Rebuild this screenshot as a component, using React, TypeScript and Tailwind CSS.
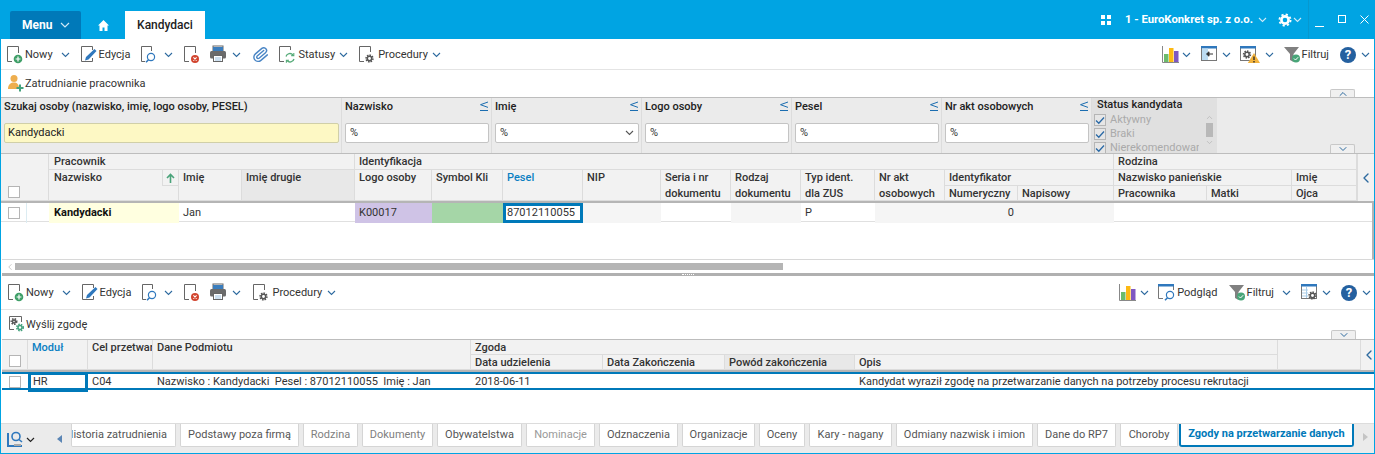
import React from "react";
import { Paperclip, ChevronLeft, ChevronUp, ChevronDown } from "lucide-react";

const Chev = ({ className = "", color = "#2d6a9f" }: { className?: string; color?: string }) => (
  <svg width="9" height="6" viewBox="0 0 9 6" className={`shrink-0 ${className}`}>
    <path d="M1 1l3.5 3.5L8 1" fill="none" stroke={color} strokeWidth="1.1" />
  </svg>
);

const Gear = ({ x, y, r = 2.2, color = "#555" }: { x: number; y: number; r?: number; color?: string }) => (
  <g>
    <circle cx={x} cy={y} r={r + 1.2} fill="none" stroke={color} strokeWidth="1.6" strokeDasharray="1.5 1.1" />
    <circle cx={x} cy={y} r={r} fill="none" stroke={color} strokeWidth="1.5" />
  </g>
);

const DocBase = () => <path d="M12.5 8V1.5H1.5v15H6" fill="none" stroke="#666" strokeWidth="1" />;

// dx moves the drawing left inside its box, doc icons sit 1px further out
const Icon = ({ children, w = 18, h = 19, dx = 0 }: { children: React.ReactNode; w?: number; h?: number; dx?: number }) => (
  <svg width={w} height={h} viewBox={`${dx} 0 ${w} ${h}`} className="shrink-0">
    {children}
  </svg>
);

const NewIcon = () => (
  <Icon dx={1}>
    <DocBase />
    <circle cx="12" cy="14" r="4.3" fill="#3f9f68" />
    <path d="M12 11.6v4.8M9.6 14h4.8" stroke="#fff" strokeWidth="1.2" />
  </Icon>
);
const EditIcon = () => (
  <Icon dx={1}>
    <path d="M12.5 5V1.5H1.5v15h11V13" fill="none" stroke="#666" />
    <path d="M5 15.5l1-3.5L14.5 4l2 2L8.5 14.5z" fill="#2f78bd" />
  </Icon>
);
const SearchIcon = () => (
  <Icon dx={1}>
    <path d="M11.5 6V1.5H1.5v15H5" fill="none" stroke="#666" />
    <circle cx="11" cy="12" r="3.6" fill="none" stroke="#2f78bd" strokeWidth="1.2" />
    <path d="M8.5 14.7L6 17.2" stroke="#2f78bd" strokeWidth="1.6" />
  </Icon>
);
const DeleteIcon = () => (
  <Icon dx={1}>
    <DocBase />
    <circle cx="12" cy="14" r="4" fill="#d2452f" />
    <path d="M10.4 12.4l3.2 3.2M13.6 12.4l-3.2 3.2" stroke="#fff" strokeWidth="1.1" />
  </Icon>
);
const PrintIcon = () => (
  <Icon>
    <rect x="4" y="1" width="10" height="5" fill="#fff" stroke="#666" />
    <rect x="4" y="2" width="10" height="4" fill="#3a7dbd" />
    <rect x="1" y="6" width="16" height="7.5" rx="1.5" fill="#6b6b6b" />
    <rect x="4.5" y="10.5" width="9" height="6" fill="#fff" stroke="#666" />
    <path d="M6 13h6M6 15h6" stroke="#9cc2e2" />
  </Icon>
);
const RefreshIcon = () => (
  <Icon dx={1}>
    <path d="M12.5 5V1.5H1.5v15H6" fill="none" stroke="#666" />
    <path d="M8 11.5a4 4 0 0 1 7-1.5M16 14a4 4 0 0 1-7 1.5" fill="none" stroke="#55ab78" strokeWidth="1.3" />
    <path d="M15.8 8v2.6h-2.6M8.4 17.8v-2.6H11" fill="none" stroke="#55ab78" strokeWidth="1.1" />
  </Icon>
);
const ProcIcon = () => (
  <Icon dx={1}>
    <path d="M12.5 7V1.5H1.5v15H6" fill="none" stroke="#666" />
    <Gear x={11.5} y={13.5} />
  </Icon>
);
const ChartIcon = () => (
  <Icon>
    <path d="M.5 1v16.5H17" fill="none" stroke="#888" />
    <rect x="2" y="9" width="4.5" height="8" fill="#6cbb6c" />
    <rect x="7" y="3" width="4.5" height="14" fill="#fdb913" />
    <rect x="12" y="6" width="4.5" height="11" fill="#7e57c2" />
  </Icon>
);
const PanelIcon = () => (
  <Icon>
    <rect x=".5" y="1.5" width="15" height="14" fill="#fff" stroke="#777" />
    <rect x="0" y="1" width="16" height="2.5" fill="#2f78bd" />
    <rect x="1" y="3.5" width="6" height="11.5" fill="#bcdcf2" />
    <path d="M12 9H6M8 6.8L5.5 9 8 11.2z" stroke="#333" fill="#333" />
  </Icon>
);
const WarnGearIcon = () => (
  <Icon w={21}>
    <rect x=".5" y="1.5" width="15" height="14" fill="#fff" stroke="#777" />
    <rect x="0" y="1" width="16" height="2.5" fill="#2f78bd" />
    <Gear x={7} y={9.5} />
    <path d="M14 8l6 10H7.8z" fill="#f2b33d" />
    <path d="M14 11.5v3.5M14 16v1.4" stroke="#222" strokeWidth="1.3" />
  </Icon>
);
const FunnelIcon = () => (
  <Icon w={19}>
    <path d="M1 2h15l-5.5 7v8L7 15V9z" fill="#808080" />
    <circle cx="13" cy="13.5" r="4" fill="#48a578" />
    <path d="M11 13.5l1.5 1.5 2.7-2.8" fill="none" stroke="#fff" strokeWidth="1" />
  </Icon>
);
const PreviewIcon = () => (
  <Icon>
    <path d="M5 15.5H.5v-14h15V7" fill="none" stroke="#777" />
    <rect x="0" y="1" width="16" height="2.5" fill="#2f78bd" />
    <circle cx="12" cy="12" r="3.6" fill="none" stroke="#2f78bd" strokeWidth="1.2" />
    <path d="M9.5 14.7L7 17.2" stroke="#2f78bd" strokeWidth="1.6" />
  </Icon>
);
const GridCfgIcon = () => (
  <Icon>
    <rect x=".5" y="1.5" width="15" height="14" fill="#fff" stroke="#777" />
    <rect x="0" y="1" width="16" height="2.5" fill="#2f78bd" />
    <path d="M1 7h6M1 10h6M1 13h6M5.5 4v11" stroke="#a9cde8" />
    <Gear x={11.5} y={12.5} />
  </Icon>
);
const PersonAddIcon = () => (
  <Icon>
    <circle cx="7" cy="4.5" r="3.5" fill="#eeae4e" />
    <path d="M1 15c0-5 3-6.5 6-6.5S12 10 12 15z" fill="#eeae4e" />
    <path d="M13 10.5v7M9.5 14h7" stroke="#45a27d" strokeWidth="2" />
  </Icon>
);
const SendIcon = () => (
  <Icon>
    <path d="M13.5 7V1.5H1.5v13H6" fill="none" stroke="#666" />
    <Gear x={6} y={6.5} r={1.5} />
    <Gear x={12} y={12.5} r={2} color="#45a27d" />
  </Icon>
);
const HelpIcon = () => (
  <div className="flex h-[16px] w-[16px] shrink-0 items-center justify-center rounded-full bg-[#24609f] text-[13px] font-bold leading-none text-white">
    ?
  </div>
);
const FilterMark = () => (
  <svg width="10" height="11" viewBox="0 0 10 11" className="absolute right-[2px] top-[3px]">
    <path d="M9 1L1.5 3.7 9 6.4M1 9.5h8" fill="none" stroke="#1b6db0" strokeWidth="1" />
  </svg>
);
const Check = ({ checked = false }: { checked?: boolean }) => (
  <div className={`flex h-[12px] w-[12px] shrink-0 items-center justify-center border border-[#b5b5b5] ${checked ? "bg-[#e6e6e6]" : "bg-white"}`}>
    {checked && (
      <svg width="10" height="9" viewBox="0 0 10 9">
        <path d="M1 4.5l2.8 2.8L9 1.5" fill="none" stroke="#2b6aa6" strokeWidth="1.3" />
      </svg>
    )}
  </div>
);

const H = ({ children, className = "" }: { children?: React.ReactNode; className?: string }) => (
  <div className={`overflow-hidden whitespace-nowrap border-b border-r border-[#dcdcdc] pl-[4px] font-medium ${className}`}>
    {children}
  </div>
);

const Filter = ({ label, children }: { label: string; children?: React.ReactNode }) => (
  <div className="relative flex w-[150px] shrink-0 flex-col border-r border-[#dcdcdc] pl-[3px] pr-[2px]">
    <div className="h-[25px] pt-[2px] font-medium text-[#222]">{label}</div>
    <FilterMark />
    <div className="flex h-[20px] items-center justify-between rounded-[2px] border border-[#c4c4c4] bg-white pl-[4px] pr-[4px] text-[#333]">
      %{children}
    </div>
  </div>
);

const Tab = ({ label, className = "" }: { label: string; className?: string }) => (
  <div className={`flex h-[23px] shrink-0 items-center whitespace-nowrap rounded-b-[2px] border border-t-0 pb-[1px] ${className}`}>
    {label}
  </div>
);

export default function App() {
  const tabBase = "justify-center border-[#d5d5d5] bg-white";
  return (
    <div className="flex h-[454px] w-[1375px] flex-col overflow-hidden border-x border-b border-[#00a4e3] bg-white text-[11px] leading-[14px] text-[#333] [font-family:Roboto,sans-serif]">
      {/* title */}
      <div className="-mx-[1px] flex h-[39px] shrink-0 items-end bg-[#00a4e3] pl-[10px] text-white">
        <div className="flex h-[28px] w-[71px] items-center rounded-t-[2px] bg-[#0079b9] pl-[12px] text-[12px] font-bold">
          Menu
          <svg width="10" height="7" viewBox="0 0 10 7" className="ml-[8px]">
            <path d="M1 1l4 4 4-4" fill="none" stroke="#cfe9f7" strokeWidth="1.2" />
          </svg>
        </div>
        <div className="flex h-[28px] w-[44px] items-center justify-center">
          <svg width="11" height="11" viewBox="0 0 11 11">
            <path d="M5.5 0L11 5.5H9.5V11H6.5V7.5H4.5V11H1.5V5.5H0z" fill="#fff" />
          </svg>
        </div>
        <div className="flex h-[28px] w-[80px] items-center justify-center bg-white text-[12px] font-medium text-[#222]">
          Kandydaci
        </div>
        <div className="flex h-[39px] flex-1 items-center font-medium">
          <div className="ml-auto grid h-[10px] w-[10px] grid-cols-2 gap-[2px]">
            <span className="bg-white" />
            <span className="bg-white" />
            <span className="bg-white" />
            <span className="bg-white" />
          </div>
          <span className="ml-[14px] text-[11.3px] font-bold">1 - EuroKonkret sp. z o.o.</span>
          <Chev color="#cfe9f7" className="ml-[5px]" />
          <svg width="14" height="14" viewBox="0 0 14 14" className="ml-[11px]">
            <circle cx="7" cy="7" r="3.6" fill="none" stroke="#fff" strokeWidth="2.6" />
            <circle cx="7" cy="7" r="5.6" fill="none" stroke="#fff" strokeWidth="1.8" strokeDasharray="2.2 2.2" />
          </svg>
          <Chev color="#cfe9f7" className="ml-[1px]" />
          <div className="ml-[6px] flex h-[39px] items-center border-l border-[#0798cf] pl-[6px] pr-[6px]">
            <svg width="9" height="9" viewBox="0 0 9 9" className="mt-[5px]">
              <path d="M0 8.5h9" stroke="#fff" />
            </svg>
            <svg width="8" height="8" viewBox="0 0 8 8" className="-mt-[2px] ml-[14px]">
              <rect x=".5" y=".5" width="7" height="7" fill="none" stroke="#fff" />
            </svg>
            <svg width="9" height="9" viewBox="0 0 9 9" className="-mt-[1px] ml-[14px]">
              <path d="M.5.5l8 8M8.5.5l-8 8" stroke="#fff" />
            </svg>
          </div>
        </div>
      </div>

      {/* main toolbar */}
      <div className="flex h-[31px] shrink-0 items-center border-b border-[#e4e4e4] pl-[6px] pr-[4px] pt-[1px]">
        <NewIcon />
        <span>Nowy</span>
        <Chev className="ml-[8px]" />
        <div className="ml-[11px]"><EditIcon /></div>
        <span>Edycja</span>
        <div className="ml-[11px]"><SearchIcon /></div>
        <Chev className="ml-[5px]" />
        <div className="ml-[11px]"><DeleteIcon /></div>
        <div className="ml-[7px]"><PrintIcon /></div>
        <Chev className="ml-[5px]" />
        <Paperclip size={17} stroke="#4a86c5" className="ml-[11px] rotate-[5deg]" />
        <div className="ml-[10px]"><RefreshIcon /></div>
        <span className="ml-[1px]">Statusy</span>
        <Chev className="ml-[4px]" />
        <div className="ml-[11px]"><ProcIcon /></div>
        <span className="ml-[1px]">Procedury</span>
        <Chev className="ml-[4px]" />
        <div className="ml-auto"><ChartIcon /></div>
        <Chev className="ml-[2px]" />
        <div className="ml-[10px]"><PanelIcon /></div>
        <Chev className="ml-[3px]" />
        <div className="ml-[9px]"><WarnGearIcon /></div>
        <Chev className="ml-[4px]" />
        <div className="ml-[9px]"><FunnelIcon /></div>
        <span>Filtruj</span>
        <div className="ml-[11px]"><HelpIcon /></div>
        <Chev className="ml-[5px]" />
      </div>

      {/* actions */}
      <div className="relative flex h-[27px] shrink-0 items-center pl-[6px]">
        <PersonAddIcon />
        <span className="pt-[1px]">Zatrudnianie pracownika</span>
        <div className="absolute bottom-0 left-[1329px] flex h-[8px] w-[25px] items-center justify-center rounded-t-[2px] border border-b-0 border-[#c8c8c8] bg-[#f0f0f0]">
          <ChevronUp size={12} stroke="#2d6a9f" strokeWidth={2} />
        </div>
      </div>

      {/* filters */}
      <div className="relative flex h-[56px] shrink-0 border-t border-[#bdbdbd] bg-[#ebebeb]">
        <div className="flex w-[341px] shrink-0 flex-col border-r border-[#dcdcdc] pl-[3px] pr-[2px]">
          <div className="h-[25px] pt-[2px] font-medium text-[#222]">Szukaj osoby (nazwisko, imię, logo osoby, PESEL)</div>
          <div className="flex h-[20px] items-center rounded-[2px] border border-[#d0cfa8] bg-[#fdf8c4] pl-[3px] text-[#222]">Kandydacki</div>
        </div>
        <Filter label="Nazwisko" />
        <Filter label="Imię">
          <Chev color="#555" />
        </Filter>
        <Filter label="Logo osoby" />
        <Filter label="Pesel" />
        <Filter label="Nr akt osobowych" />
        <div className="flex h-[55px] w-[125px] shrink-0 flex-col overflow-hidden bg-[#e0e0e0] pl-[2px]">
          <div className="pl-[3px] font-medium text-[#222]">Status kandydata</div>
          <div className="flex min-h-0 flex-1 pt-[1px]">
            <div className="mr-[3px] w-[105px] overflow-hidden whitespace-nowrap text-[#aaa]">
              <div className="flex h-[14px] items-center gap-[4px]"><Check checked />Aktywny</div>
              <div className="flex h-[14px] items-center gap-[4px]"><Check checked />Braki</div>
              <div className="flex h-[14px] items-center gap-[4px]"><Check checked />Nierekomendowany</div>
            </div>
            <div className="flex w-[14px] flex-col items-center text-[#b5b5b5]">
              <ChevronUp size={9} />
              <div className="my-[1px] h-[14px] w-[7px] bg-[#b8b8b8]" />
              <ChevronDown size={9} />
            </div>
          </div>
        </div>
        <div className="absolute left-[1329px] top-[46px] flex h-[9px] w-[25px] items-center justify-center rounded-t-[2px] border border-b-0 border-[#c8c8c8] bg-[#f0f0f0]">
          <ChevronDown size={12} stroke="#2d6a9f" strokeWidth={2} />
        </div>
      </div>

      {/* top grid */}
      <div className="flex h-[48px] shrink-0 border-t border-[#bdbdbd] bg-[#f2f2f2] leading-[15px]">
        <div className="grid grid-cols-[26px_22px_130px_63px_113px_77px_71px_80px_78px_70px_70px_74px_70px_73px_96px_93px_85px_65px] grid-rows-[16px_16px_15px]">
          <H className="relative col-span-2 row-span-3"><div className="absolute bottom-[2px] left-[7px]"><Check /></div></H>
          <H className="col-span-3"><span className="ml-[1px]">Pracownik</span></H>
          <H className="col-span-10">Identyfikacja</H>
          <H className="col-span-3">Rodzina</H>
          <H className="relative row-span-2">
            <span className="ml-[1px]">Nazwisko</span>
            <div className="absolute right-0 top-0 flex h-[16px] w-[16px] items-center justify-center border-b border-l border-[#dcdcdc]">
              <svg width="9" height="10" viewBox="0 0 9 10">
                <path d="M4.5 10V1.5M1 5l3.5-3.5L8 5" fill="none" stroke="#4aa37a" strokeWidth="1.6" />
              </svg>
            </div>
          </H>
          <H className="row-span-2">Imię</H>
          <H className="row-span-2 bg-[#e8e8e8]">Imię drugie</H>
          <H className="row-span-2">Logo osoby</H>
          <H className="row-span-2">Symbol Kli</H>
          <H className="row-span-2 text-[#0b7fc2]">Pesel</H>
          <H className="row-span-2">NIP</H>
          <H className="row-span-2 leading-[16px]">Seria i nr<br />dokumentu</H>
          <H className="row-span-2 leading-[16px]">Rodzaj<br />dokumentu</H>
          <H className="row-span-2 leading-[16px]">Typ ident.<br />dla ZUS</H>
          <H className="row-span-2 leading-[16px]">Nr akt<br />osobowych</H>
          <H className="col-span-2">Identyfikator</H>
          <H className="col-span-2">Nazwisko panieńskie</H>
          <H>Imię</H>
          <H>Numeryczny</H>
          <H>Napisowy</H>
          <H>Pracownika</H>
          <H>Matki</H>
          <H>Ojca</H>
        </div>
        <div className="flex flex-1 items-center justify-center border-l border-[#dcdcdc] pr-[2px]">
          <ChevronLeft size={16} stroke="#2d6a9f" />
        </div>
      </div>
      <div className="flex h-[58px] min-h-0 shrink-0">
        <div className="min-w-0 flex-1">
          <div className="border-t-[2px] border-[#b5b5b5]">
            <div className="grid h-[19px] grid-cols-[26px_22px_130px_63px_113px_77px_71px_80px_78px_70px_70px_74px_70px_73px_96px_93px_85px_65px] items-stretch border-b border-[#e0e0e0]">
              <div className="flex items-center justify-center border-r border-[#dcecf2]"><Check /></div>
              <div />
              <div className="flex items-center bg-[#ffffe0] pl-[5px] font-bold text-[#111]">Kandydacki</div>
              <div className="col-span-2 flex items-center pl-[4px]">Jan</div>
              <div className="flex items-center bg-[#cfc3e6] pl-[4px]">K00017</div>
              <div className="bg-[#a5d6a7]" />
              <div className="flex items-center border-[3px] border-[#0079b9] pl-[1px]">87012110055</div>
              <div className="bg-[#f5f5f5]" />
              <div />
              <div className="bg-[#f5f5f5]" />
              <div className="flex items-center pl-[4px]">P</div>
              <div className="bg-[#f5f5f5]" />
              <div className="flex items-center justify-end bg-[#f5f5f5] pr-[4px]">0</div>
              <div className="bg-[#f5f5f5]" />
            </div>
          </div>
        </div>
        <div className="w-[2px] bg-[#b5b5b5]" />
      </div>

      {/* horizontal scroll */}
      <div className="ml-[1px] flex h-[14px] shrink-0 items-center border-t border-[#d8d8d8] pl-[3px]">
        <ChevronLeft size={10} stroke="#c0c0c0" />
        <div className="h-[7px] w-[768px] bg-[#b5b5b5]" />
      </div>
      <div className="relative ml-[1px] h-[3px] shrink-0 bg-[#b0b0b0]">
        <div className="absolute left-[680px] top-[1px] h-[1px] w-[12px] border-t border-dotted border-white" />
      </div>

      {/* lower toolbar */}
      <div className="flex h-[34px] shrink-0 items-center border-b border-[#e4e4e4] pl-[7px] pr-[3px]">
        <NewIcon />
        <span>Nowy</span>
        <Chev className="ml-[8px]" />
        <div className="ml-[11px]"><EditIcon /></div>
        <span>Edycja</span>
        <div className="ml-[11px]"><SearchIcon /></div>
        <Chev className="ml-[4px]" />
        <div className="ml-[11px]"><DeleteIcon /></div>
        <div className="ml-[7px]"><PrintIcon /></div>
        <Chev className="ml-[5px]" />
        <div className="ml-[12px]"><ProcIcon /></div>
        <span className="ml-[1px]">Procedury</span>
        <Chev className="ml-[5px]" />
        <div className="ml-auto"><ChartIcon /></div>
        <Chev className="ml-[3px]" />
        <div className="ml-[9px]"><PreviewIcon /></div>
        <span className="ml-[1px]">Podgląd</span>
        <div className="ml-[10px]"><FunnelIcon /></div>
        <span>Filtruj</span>
        <Chev className="ml-[8px]" />
        <div className="ml-[10px]"><GridCfgIcon /></div>
        <Chev className="ml-[3px]" />
        <div className="ml-[10px]"><HelpIcon /></div>
        <Chev className="ml-[5px]" />
      </div>
      <div className="relative flex h-[29px] shrink-0 items-center pl-[7px]">
        <SendIcon />
        <span>Wyślij zgodę</span>
        <div className="absolute bottom-0 left-[1330px] flex h-[9px] w-[25px] items-center justify-center rounded-t-[2px] border border-b-0 border-[#c8c8c8] bg-[#f0f0f0]">
          <ChevronDown size={12} stroke="#2d6a9f" strokeWidth={2} />
        </div>
      </div>

      {/* lower grid */}
      <div className="ml-[1px] flex h-[31px] shrink-0 border-t border-[#bdbdbd] bg-[#f2f2f2] leading-[15px]">
        <div className="grid grid-cols-[26px_60px_65px_318px_132px_122px_130px_423px_83px] grid-rows-[15px_15px]">
          <H className="relative row-span-2"><div className="absolute bottom-[2px] left-[7px]"><Check /></div></H>
          <H className="row-span-2 text-[#0b7fc2]">Moduł</H>
          <H className="row-span-2">Cel przetwarzania</H>
          <H className="row-span-2">Dane Podmiotu</H>
          <H className="col-span-4">Zgoda</H>
          <H className="row-span-2" />
          <H>Data udzielenia</H>
          <H>Data Zakończenia</H>
          <H className="bg-[#e8e8e8]">Powód zakończenia</H>
          <H>Opis</H>
        </div>
        <div className="flex flex-1 items-center justify-center pr-[1px]">
          <ChevronLeft size={16} stroke="#2d6a9f" />
        </div>
      </div>
      <div className="ml-[1px] h-[2px] shrink-0 bg-[#b5b5b5]" />
      <div className="ml-[1px] grid h-[18px] shrink-0 grid-cols-[26px_60px_65px_318px_132px_122px_130px_1fr] border-y-[2px] border-[#0079b9]">
        <div className="flex items-center justify-center"><Check /></div>
        <div className="-my-[2px] flex items-center border-[3px] border-[#0079b9] pl-[2px]">HR</div>
        <div className="flex items-center pl-[4px]">C04</div>
        <div className="flex items-center whitespace-pre pl-[4px]">Nazwisko : Kandydacki  Pesel : 87012110055  Imię : Jan</div>
        <div className="flex items-center pl-[4px]">2018-06-11</div>
        <div />
        <div />
        <div className="flex items-center pl-[4px]">Kandydat wyraził zgodę na przetwarzanie danych na potrzeby procesu rekrutacji</div>
      </div>
      <div className="flex-1" />

      {/* sheet tabs */}
      <div className="flex h-[30px] shrink-0 items-start border-t border-[#dcdcdc] bg-[#ebebeb] text-[#555]">
        <div className="flex h-[29px] w-[70px] shrink-0 items-center pl-[6px]">
          <svg width="16" height="16" viewBox="0 0 16 16">
            <circle cx="9" cy="5.5" r="4" fill="none" stroke="#2f78bd" strokeWidth="1.6" />
            <path d="M12 8.5l3 2.5" stroke="#2f78bd" strokeWidth="1.6" />
            <path d="M1 2v13h14" fill="none" stroke="#2f78bd" strokeWidth="2" />
            <rect x="7" y="13" width="7" height="2" fill="#aaa" />
          </svg>
          <svg width="9" height="6" viewBox="0 0 9 6" className="ml-[3px] mt-[3px]">
            <path d="M1 1l3.5 3.5L8 1" fill="none" stroke="#222" strokeWidth="1.2" />
          </svg>
          <svg width="5" height="8" viewBox="0 0 5 8" className="ml-[22px]">
            <path d="M5 0v8L0 4z" fill="#5b86b5" />
          </svg>
        </div>
        <div className="flex gap-[4px]">
          <Tab label="Historia zatrudnienia" className="w-[105px] justify-end overflow-hidden border-[#d5d5d5] bg-white pr-[8px]" />
          <Tab label="Podstawy poza firmą" className={`w-[119px] ${tabBase}`} />
          <Tab label="Rodzina" className={`w-[55px] text-[#808080] ${tabBase}`} />
          <Tab label="Dokumenty" className={`w-[71px] text-[#808080] ${tabBase}`} />
          <Tab label="Obywatelstwa" className={`w-[85px] ${tabBase}`} />
          <Tab label="Nominacje" className={`w-[69px] text-[#999] ${tabBase}`} />
          <Tab label="Odznaczenia" className={`w-[79px] ${tabBase}`} />
          <Tab label="Organizacje" className={`w-[73px] ${tabBase}`} />
          <Tab label="Oceny" className={`w-[46px] ${tabBase}`} />
          <Tab label="Kary - nagany" className={`w-[83px] ${tabBase}`} />
          <Tab label="Odmiany nazwisk i imion" className={`w-[137px] ${tabBase}`} />
          <Tab label="Dane do RP7" className={`w-[79px] ${tabBase}`} />
          <Tab label="Choroby" className={`w-[58px] ${tabBase}`} />
        </div>
        <Tab label="Zgody na przetwarzanie danych" className="ml-[1px] w-[175px] justify-center rounded-b-[3px] border-x-2 border-b-2 border-[#0079b9] bg-white font-bold text-[#0079b9]" />
        <svg width="5" height="8" viewBox="0 0 5 8" className="ml-[9px] mt-[9px]">
          <path d="M0 0v8l5-4z" fill="#c4c4c4" />
        </svg>
      </div>
    </div>
  );
}
